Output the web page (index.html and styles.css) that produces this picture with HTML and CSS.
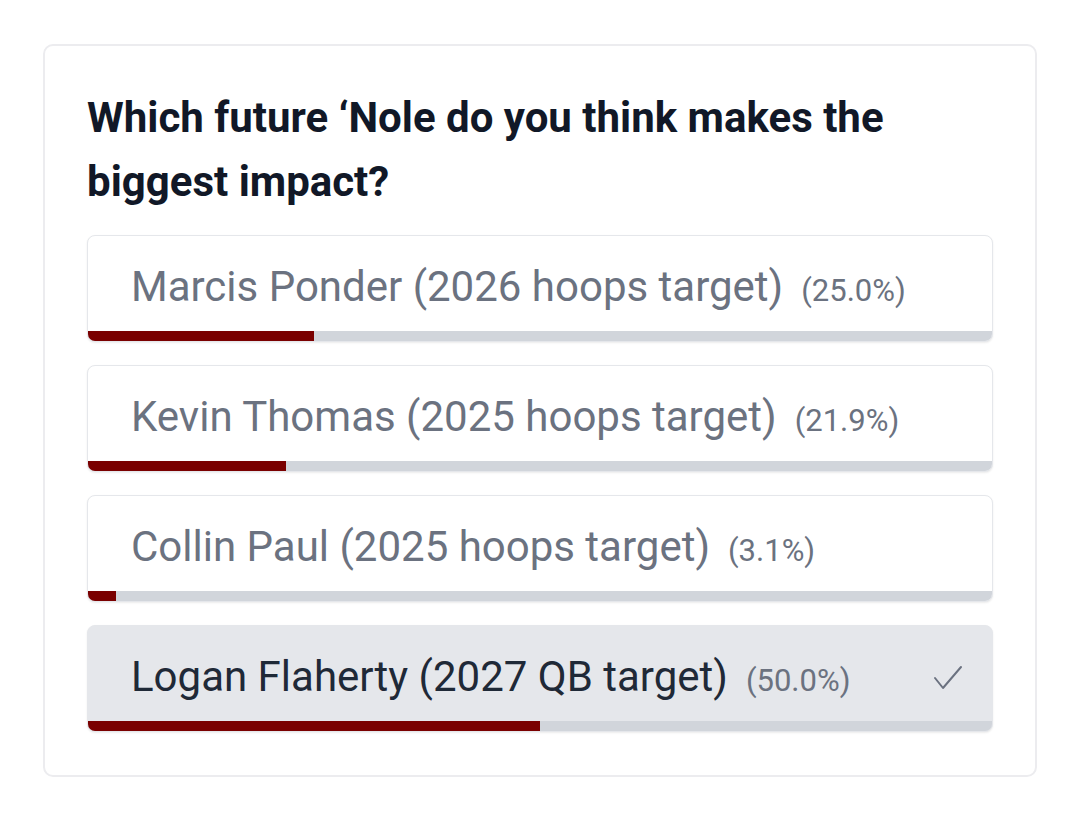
FILE: index.html
```html
<!DOCTYPE html>
<html lang="en">
<head>
    <meta charset="UTF-8">
    <meta name="viewport" content="width=device-width, initial-scale=1.0">
    <title>Poll</title>
    <link rel="stylesheet" href="styles.css">
</head>
<body>
    <div class="poll-card">
        <h2 class="poll-question">Which future ‘Nole do you think makes the biggest impact?</h2>

        <div class="poll-options">
            <div class="poll-option">
                <div class="option-row">
                    <span class="option-text">
                        <span class="option-label">Marcis Ponder (2026 hoops target)</span>
                        <span class="option-pct">(25.0%)</span>
                    </span>
                </div>
                <div class="option-bar"><div class="option-fill" style="width: 25%"></div></div>
            </div>

            <div class="poll-option">
                <div class="option-row">
                    <span class="option-text">
                        <span class="option-label">Kevin Thomas (2025 hoops target)</span>
                        <span class="option-pct">(21.9%)</span>
                    </span>
                </div>
                <div class="option-bar"><div class="option-fill" style="width: 21.9%"></div></div>
            </div>

            <div class="poll-option">
                <div class="option-row">
                    <span class="option-text">
                        <span class="option-label">Collin Paul (2025 hoops target)</span>
                        <span class="option-pct">(3.1%)</span>
                    </span>
                </div>
                <div class="option-bar"><div class="option-fill" style="width: 3.1%"></div></div>
            </div>

            <div class="poll-option selected">
                <div class="option-row">
                    <span class="option-text">
                        <span class="option-label">Logan Flaherty (2027 QB target)</span>
                        <span class="option-pct">(50.0%)</span>
                    </span>
                    <svg class="option-check" width="30" height="26" viewBox="0 0 30 26">
                        <polyline points="2,13 10,23 28,2" fill="none" stroke="#6b7280" stroke-width="2" stroke-linecap="round" stroke-linejoin="round"/>
                    </svg>
                </div>
                <div class="option-bar"><div class="option-fill" style="width: 50%"></div></div>
            </div>
        </div>
    </div>
</body>
</html>
```

FILE: styles.css
```css
body {
    margin: 0;
    background: #ffffff;
    font-family: Roboto, "Liberation Sans", Arial, sans-serif;
    color: #111827;
}

.poll-card {
    margin: 44px 43px 0 43px;
    width: 994px;
    box-sizing: border-box;
    height: 733px;
    padding: 40px 42px 44px 42px;
    border: 2px solid #ececef;
    border-radius: 10px;
}

.poll-question {
    margin: 0 0 21px 0;
    font-size: 42px;
    line-height: 64px;
    font-weight: 700;
    color: #111827;
}

.poll-options {
    display: flex;
    flex-direction: column;
    gap: 23px;
}

.poll-option {
    background: #ffffff;
    border: 1px solid #e5e7eb;
    border-radius: 8px;
    overflow: hidden;
    box-shadow: 0 1px 2px rgba(0, 0, 0, 0.08);
}

.poll-option.selected {
    background: #e5e7eb;
}

.option-row {
    display: flex;
    align-items: center;
    box-sizing: border-box;
    height: 95px;
    padding: 6px 29px 0 43px;
}

.option-text {
    line-height: 1;
}

.option-label {
    font-size: 42px;
    color: #6b7280;
}

.selected .option-label {
    color: #1f2937;
}

.option-pct {
    margin-left: 14px;
    font-size: 31px;
    color: #6b7280;
}

.option-check {
    margin-left: auto;
    margin-top: 2px;
}

.option-bar {
    height: 10px;
    background: #d1d5db;
}

.option-fill {
    height: 100%;
    background: #7a0000;
}
```
